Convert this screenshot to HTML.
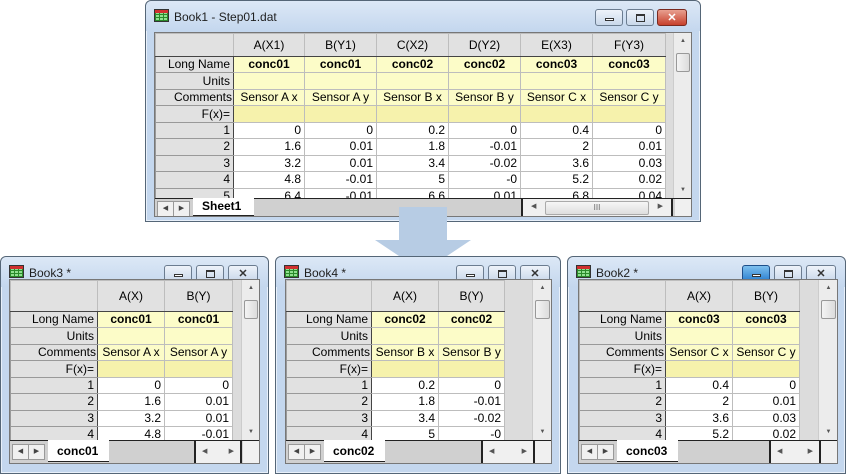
<!DOCTYPE html>
<html><head><meta charset="utf-8"><style>
body{margin:0;width:846px;height:473px;background:#fff;position:relative;overflow:hidden;font-family:"Liberation Sans",sans-serif;font-size:12px;color:#000}
.win{position:absolute;background:#c4d7ee;border:1px solid #556677;border-radius:6px 6px 0 0;box-shadow:inset 0 0 0 1px #e8f0fa}
.tb{position:absolute;left:0;right:0;top:0;height:30px;background:linear-gradient(#dce8f6,#c4d7ee);border-radius:6px 6px 0 0}
.ttl{position:absolute;top:9px;left:28px;font-size:12px;color:#1e1e1e}
.ico{position:absolute;left:8px;top:8px;width:15px;height:13px;background:repeating-linear-gradient(90deg,#2a8a2a 0 1px,transparent 1px 4px),repeating-linear-gradient(0deg,#2a8a2a 0 1px,#8fe08f 1px 3px);border:1px solid #333;box-sizing:border-box}
.ico:before{content:"";position:absolute;left:0;right:0;top:0;height:3px;background:#d03030}
.btn{position:absolute;top:8px;width:28px;height:17px;border:1px solid #6b7c90;border-radius:3px;background:linear-gradient(#eef3fa,#c9d8ea);box-sizing:border-box}
.btn.min:after{content:"";position:absolute;left:9px;top:8px;width:9px;height:3px;border:1px solid #333;background:#fff;box-sizing:border-box}
.btn.max:after{content:"";position:absolute;left:9px;top:4px;width:9px;height:8px;border:1px solid #333;border-top-width:2px;box-sizing:border-box}
.btn.cls{width:30px}
.btn.cls:after{content:"✕";position:absolute;left:0;right:0;top:1px;text-align:center;font-size:11px;color:#333;font-weight:bold}
.btn.red{background:linear-gradient(#e8a090,#c7402c);border-color:#7a2a20}
.btn.red:after{color:#fff}
.btn.act{background:linear-gradient(#7ec0ee,#2a7fd0);border-color:#1e4f8a}
.grid{position:absolute;background:#dcdcdc;overflow:hidden;border:1px solid #777}
table{border-collapse:collapse;table-layout:fixed;position:absolute;left:0;top:0}
td{border:1px solid #bdbdbd;padding:0 3px;white-space:nowrap;overflow:hidden;text-align:right;height:15.45px;line-height:15px}
tr.hd td{height:22px;text-align:center;background:#e1e1e1;border-bottom:1px solid #444}
.sm tr.hd td{height:30px}
tr.ln td{background:#fcfcc8;text-align:center;font-weight:bold}
tr.un td{background:#fcfcc8}
tr.cm td{background:#fcfcc8;text-align:center;padding:0 1px}
tr.fx td{background:#f6f2ac}
tr td.h{background:#e1e1e1;text-align:right;font-weight:normal;border-color:#999;border-right:1px solid #444}
tr.d td{background:#fff}
tr.d td.h{background:#e1e1e1}
.vs{position:absolute;background:#ececec;border-left:1px solid #ccc}
.vs .th{position:absolute;left:2px;right:2px;top:20px;height:17px;border:1px solid #999;border-radius:2px;background:linear-gradient(90deg,#f4f4f4,#dcdcdc)}
.vs .up{position:absolute;top:5px;left:0;right:0;text-align:center;font-size:6px;color:#555}
.vs .dn{position:absolute;bottom:5px;left:0;right:0;text-align:center;font-size:6px;color:#555}
.bb{position:absolute;background:#d0d0d0;border-top:1px solid #222}
.nav{position:absolute;top:2px;width:15px;height:14px;border:1px solid #999;background:#f0f0f0;font-size:7px;line-height:14px;text-align:center;color:#444}
.tab{position:absolute;top:-1px;height:17px;background:#fff;border-bottom:1px solid #222;font-weight:bold;font-size:12px;line-height:17px;padding-left:9px}
.hs{position:absolute;top:0;height:18px;background:#f0f0f0;border-left:2px solid #222;border-right:2px solid #222;box-sizing:border-box}
.grip{position:absolute;top:0;height:18px;background:#f0f0f0}
</style></head><body>

<!-- Book1 -->
<div class="win" style="left:145px;top:0;width:554px;height:220px">
<div class="tb"></div><div class="ico"></div><div class="ttl">Book1 - Step01.dat</div>
<div class="btn min" style="left:449px"></div><div class="btn max" style="left:480px"></div><div class="btn cls red" style="left:511px"></div>
<div class="grid" style="left:8px;top:31px;width:536px;height:183px">
<table style="width:510px">
<colgroup><col style="width:78px"><col style="width:71px"><col style="width:72px"><col style="width:72px"><col style="width:72px"><col style="width:72px"><col style="width:73px"></colgroup>
<tr class="hd"><td></td><td>A(X1)</td><td>B(Y1)</td><td>C(X2)</td><td>D(Y2)</td><td>E(X3)</td><td>F(Y3)</td></tr>
<tr class="ln"><td class="h">Long Name</td><td>conc01</td><td>conc01</td><td>conc02</td><td>conc02</td><td>conc03</td><td>conc03</td></tr>
<tr class="un"><td class="h">Units</td><td></td><td></td><td></td><td></td><td></td><td></td></tr>
<tr class="cm"><td class="h">Comments</td><td>Sensor A x</td><td>Sensor A y</td><td>Sensor B x</td><td>Sensor B y</td><td>Sensor C x</td><td>Sensor C y</td></tr>
<tr class="fx"><td class="h">F(x)=</td><td></td><td></td><td></td><td></td><td></td><td></td></tr>
<tr class="d"><td class="h">1</td><td>0</td><td>0</td><td>0.2</td><td>0</td><td>0.4</td><td>0</td></tr>
<tr class="d"><td class="h">2</td><td>1.6</td><td>0.01</td><td>1.8</td><td>-0.01</td><td>2</td><td>0.01</td></tr>
<tr class="d"><td class="h">3</td><td>3.2</td><td>0.01</td><td>3.4</td><td>-0.02</td><td>3.6</td><td>0.03</td></tr>
<tr class="d"><td class="h">4</td><td>4.8</td><td>-0.01</td><td>5</td><td>-0</td><td>5.2</td><td>0.02</td></tr>
<tr class="d"><td class="h">5</td><td>6.4</td><td>-0.01</td><td>6.6</td><td>0.01</td><td>6.8</td><td>0.04</td></tr>
</table>
<div class="vs" style="left:518px;top:0;width:18px;height:165px"><div class="up">▲</div><div class="th"></div><div class="dn">▼</div></div>
<div class="bb" style="left:0;top:165px;width:536px;height:18px">
<div class="nav" style="left:2px">◀</div><div class="nav" style="left:18px">▶</div>
<div class="tab" style="left:38px;width:52px">Sheet1</div>
<div class="hs" style="left:366px;width:152px"><span style="position:absolute;left:8px;top:3px;font-size:7px;color:#555">◀</span><div style="position:absolute;left:22px;right:22px;top:2px;height:12px;border:1px solid #aaa;border-radius:2px;background:linear-gradient(#f6f6f6,#dedede);font-size:8px;text-align:center;line-height:12px;color:#666">III</div><span style="position:absolute;right:8px;top:3px;font-size:7px;color:#555">▶</span></div>
<div class="grip" style="left:520px;width:16px"></div>
</div>
</div>
</div>

<!-- Arrow -->
<svg style="position:absolute;left:0;top:0" width="846" height="473"><polygon points="399,207 447,207 447,240 471,240 423,272 375,240 399,240" fill="#b7cce4"/></svg>

<!-- Book3 -->
<div class="win" style="left:0;top:256px;width:267px;height:216px">
<div class="tb"></div><div class="ico"></div><div class="ttl">Book3 *</div>
<div class="btn min" style="left:163px"></div><div class="btn max" style="left:195px"></div><div class="btn cls" style="left:227px"></div>
<div class="grid sm" style="left:8px;top:22px;width:249px;height:183px">
<table style="width:222px">
<colgroup><col style="width:87px"><col style="width:67px"><col style="width:68px"></colgroup>
<tr class="hd"><td></td><td>A(X)</td><td>B(Y)</td></tr>
<tr class="ln"><td class="h">Long Name</td><td>conc01</td><td>conc01</td></tr>
<tr class="un"><td class="h">Units</td><td></td><td></td></tr>
<tr class="cm"><td class="h">Comments</td><td>Sensor A x</td><td>Sensor A y</td></tr>
<tr class="fx"><td class="h">F(x)=</td><td></td><td></td></tr>
<tr class="d"><td class="h">1</td><td>0</td><td>0</td></tr>
<tr class="d"><td class="h">2</td><td>1.6</td><td>0.01</td></tr>
<tr class="d"><td class="h">3</td><td>3.2</td><td>0.01</td></tr>
<tr class="d"><td class="h">4</td><td>4.8</td><td>-0.01</td></tr>
<tr class="d"><td class="h">5</td><td>6.4</td><td>-0.01</td></tr>
</table>
<div class="vs" style="left:231px;top:0;width:18px;height:160px"><div class="up">▲</div><div class="th"></div><div class="dn">▼</div></div>
<div class="bb" style="left:0;top:160px;width:249px;height:23px">
<div class="nav" style="left:2px;top:3px">◀</div><div class="nav" style="left:18px;top:3px">▶</div>
<div class="tab" style="left:38px;width:52px;height:21px;line-height:22px">conc01</div>
<div class="hs" style="left:184px;width:48px;height:23px"><span style="position:absolute;left:6px;top:6px;font-size:7px;color:#555">◀</span><span style="position:absolute;right:6px;top:6px;font-size:7px;color:#555">▶</span></div>
<div class="grip" style="left:233px;width:16px;height:23px"></div>
</div>
</div>
</div>

<!-- Book4 -->
<div class="win" style="left:275px;top:256px;width:284px;height:216px">
<div class="tb"></div><div class="ico"></div><div class="ttl">Book4 *</div>
<div class="btn min" style="left:180px"></div><div class="btn max" style="left:212px"></div><div class="btn cls" style="left:244px"></div>
<div class="grid sm" style="left:9px;top:22px;width:265px;height:183px">
<table style="width:218px">
<colgroup><col style="width:85px"><col style="width:67px"><col style="width:66px"></colgroup>
<tr class="hd"><td></td><td>A(X)</td><td>B(Y)</td></tr>
<tr class="ln"><td class="h">Long Name</td><td>conc02</td><td>conc02</td></tr>
<tr class="un"><td class="h">Units</td><td></td><td></td></tr>
<tr class="cm"><td class="h">Comments</td><td>Sensor B x</td><td>Sensor B y</td></tr>
<tr class="fx"><td class="h">F(x)=</td><td></td><td></td></tr>
<tr class="d"><td class="h">1</td><td>0.2</td><td>0</td></tr>
<tr class="d"><td class="h">2</td><td>1.8</td><td>-0.01</td></tr>
<tr class="d"><td class="h">3</td><td>3.4</td><td>-0.02</td></tr>
<tr class="d"><td class="h">4</td><td>5</td><td>-0</td></tr>
<tr class="d"><td class="h">5</td><td>6.6</td><td>0.01</td></tr>
</table>
<div class="vs" style="left:246px;top:0;width:19px;height:160px"><div class="up">▲</div><div class="th"></div><div class="dn">▼</div></div>
<div class="bb" style="left:0;top:160px;width:265px;height:23px">
<div class="nav" style="left:2px;top:3px">◀</div><div class="nav" style="left:18px;top:3px">▶</div>
<div class="tab" style="left:38px;width:52px;height:21px;line-height:22px">conc02</div>
<div class="hs" style="left:195px;width:54px;height:23px"><span style="position:absolute;left:6px;top:6px;font-size:7px;color:#555">◀</span><span style="position:absolute;right:6px;top:6px;font-size:7px;color:#555">▶</span></div>
<div class="grip" style="left:249px;width:16px;height:23px"></div>
</div>
</div>
</div>

<!-- Book2 -->
<div class="win" style="left:567px;top:256px;width:277px;height:216px">
<div class="tb"></div><div class="ico"></div><div class="ttl">Book2 *</div>
<div class="btn min act" style="left:174px"></div><div class="btn max" style="left:206px"></div><div class="btn cls" style="left:238px"></div>
<div class="grid sm" style="left:10px;top:22px;width:258px;height:183px">
<table style="width:220px">
<colgroup><col style="width:86px"><col style="width:67px"><col style="width:67px"></colgroup>
<tr class="hd"><td></td><td>A(X)</td><td>B(Y)</td></tr>
<tr class="ln"><td class="h">Long Name</td><td>conc03</td><td>conc03</td></tr>
<tr class="un"><td class="h">Units</td><td></td><td></td></tr>
<tr class="cm"><td class="h">Comments</td><td>Sensor C x</td><td>Sensor C y</td></tr>
<tr class="fx"><td class="h">F(x)=</td><td></td><td></td></tr>
<tr class="d"><td class="h">1</td><td>0.4</td><td>0</td></tr>
<tr class="d"><td class="h">2</td><td>2</td><td>0.01</td></tr>
<tr class="d"><td class="h">3</td><td>3.6</td><td>0.03</td></tr>
<tr class="d"><td class="h">4</td><td>5.2</td><td>0.02</td></tr>
<tr class="d"><td class="h">5</td><td>6.8</td><td>0.04</td></tr>
</table>
<div class="vs" style="left:239px;top:0;width:19px;height:160px"><div class="up">▲</div><div class="th"></div><div class="dn">▼</div></div>
<div class="bb" style="left:0;top:160px;width:258px;height:23px">
<div class="nav" style="left:2px;top:3px">◀</div><div class="nav" style="left:18px;top:3px">▶</div>
<div class="tab" style="left:38px;width:52px;height:21px;line-height:22px">conc03</div>
<div class="hs" style="left:190px;width:52px;height:23px"><span style="position:absolute;left:6px;top:6px;font-size:7px;color:#555">◀</span><span style="position:absolute;right:6px;top:6px;font-size:7px;color:#555">▶</span></div>
<div class="grip" style="left:242px;width:16px;height:23px"></div>
</div>
</div>
</div>

</body></html>
